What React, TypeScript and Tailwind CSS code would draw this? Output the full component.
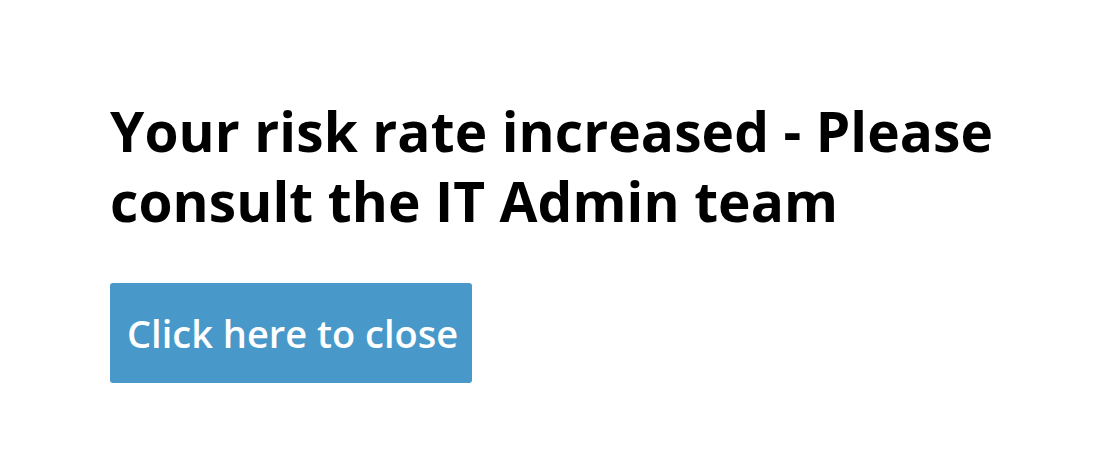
export default function App() {
  return (
    <div className="min-h-[462px] w-full bg-white pl-[110px] pt-[96px] font-['Open_Sans','Noto_Sans',sans-serif]">
      <h1 className="w-[920px] text-[55px] font-bold leading-[70px] tracking-[0.1px] text-black">
        Your risk rate increased - Please consult the IT Admin team
      </h1>
      <button className="mt-[47px] flex h-[100px] w-[362px] items-center rounded-[3px] bg-[#4899ca] pl-[17px] text-[38px] font-semibold text-white">
        Click here to close
      </button>
    </div>
  );
}
